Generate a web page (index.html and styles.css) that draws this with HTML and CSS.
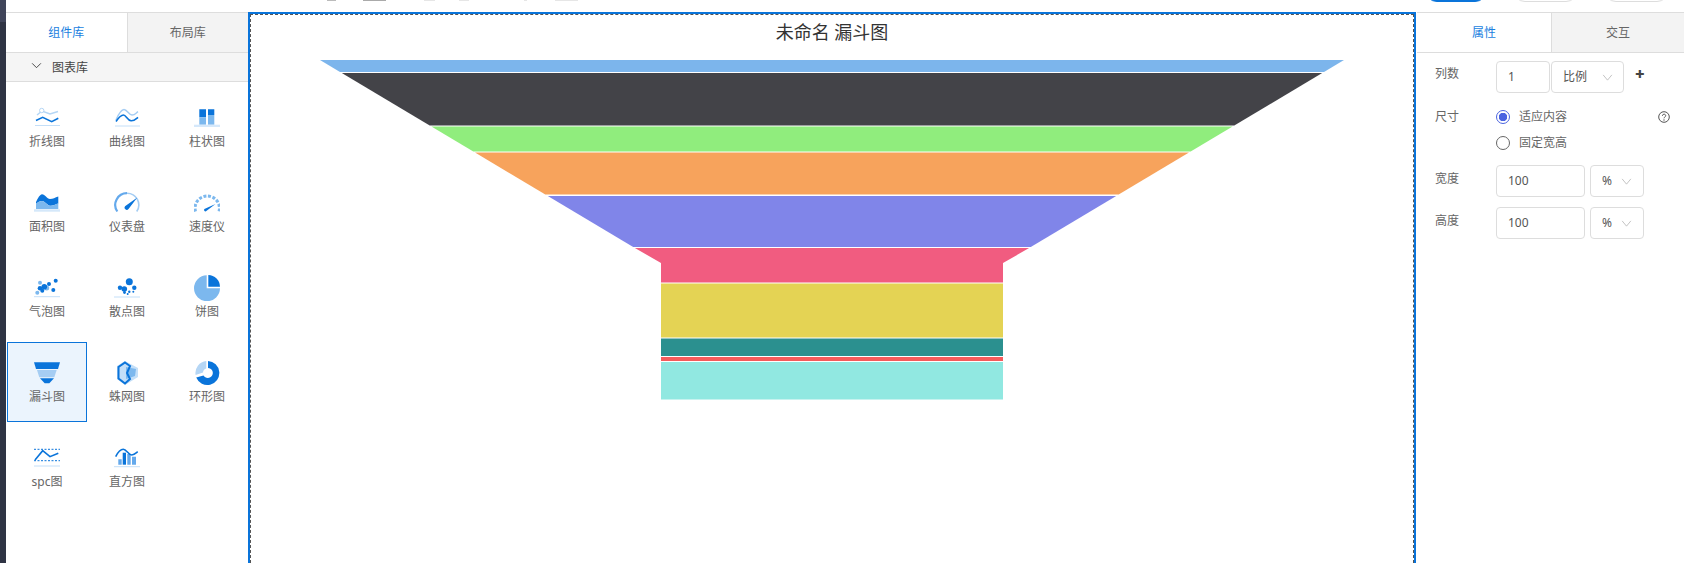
FILE: index.html
```html
<!DOCTYPE html>
<html lang="zh-CN">
<head>
    <meta charset="UTF-8">
    <meta name="viewport" content="width=device-width, initial-scale=1.0">
    <title>未命名 漏斗图</title>
    <link rel="stylesheet" href="styles.css">
</head>
<body>
    <div class="rail"><div class="rail-top"></div></div>
    <div class="main">
        <div class="topbar">
            <div class="top-tools">
                <span class="mark m1"></span><span class="mark m2"></span><span class="mark m3"></span>
                <span class="mark m4"></span><span class="mark m5"></span><span class="mark m6"></span>
            </div>
            <div class="top-btns">
                <span class="top-btn primary"></span>
                <span class="top-btn"></span>
                <span class="top-btn"></span>
            </div>
        </div>
        <div class="work">
            <div class="left">
                <div class="tabs">
                    <div class="tab active">组件库</div>
                    <div class="tab">布局库</div>
                </div>
                <div class="group-head">
                    <svg class="chev" viewBox="0 0 12 8"><path d="M1 1.500l5 5 5-5" fill="none" stroke="#333" stroke-width="1"/></svg>
                    <span>图表库</span>
                </div>
                <div class="grid">
                    <div class="cell">
                        <svg class="ico" viewBox="0 0 26 26">
                            <path d="M3 10L8 6l8 3 8-2.500" fill="none" stroke="#b5d6f5" stroke-width="1.500"/>
                            <circle cx="7.700" cy="5.500" r="2.200" fill="#fff" stroke="#b5d6f5"/>
                            <path d="M2 15.500l6.700-3.200 9 4.400 6.600-3.400" fill="none" stroke="#0a74da" stroke-width="1.600"/>
                            <path d="M1 20.500h25" stroke="#c4dff8"/>
                        </svg>
                        <div>折线图</div>
                    </div>
                    <div class="cell">
                        <svg class="ico" viewBox="0 0 26 26">
                            <path d="M2 15C5 8 7 4.500 10 4.500s5 5.500 8 5.500 4-2 6-3.300" fill="none" stroke="#a5cdf3" stroke-width="1.500"/>
                            <path d="M2 16.500C5 12 7 10 9.500 10s4 5.500 7.500 5.800 5-2 7-3.500" fill="none" stroke="#0a74da" stroke-width="1.600"/>
                            <path d="M1 21h25" stroke="#c4dff8"/>
                        </svg>
                        <div>曲线图</div>
                    </div>
                    <div class="cell">
                        <svg class="ico" viewBox="0 0 26 26">
                            <path d="M5.300 4.300H12v8H5.300zM14 4.300h6.300V10H14z" fill="#0a74da"/>
                            <path d="M5.300 12.300H12v7.400H5.300zM14 10h6.300v9.700H14z" fill="#7cb8ee"/>
                            <path d="M0 19.700h26V22H0z" fill="#d5e8fa"/>
                        </svg>
                        <div>柱状图</div>
                    </div>

                    <div class="cell">
                        <svg class="ico" viewBox="0 0 26 26">
                            <path d="M2 12C4 8 6 4.300 8 4.300c3 0 5 4.700 8 4.700 3 0 5-1.500 8.300-2.500v7C21 14.500 19 16 16 15.700 13 15.400 11 11 8 11c-2 0-4 1-6 3z" fill="#0a74da"/>
                            <path d="M2 13.500c2-1.500 4-2.500 6-2.500 3 0 5 4.400 8 4.700 3 .3 5-1.200 8.300-2.400V19H2z" fill="#7cb8ee"/>
                            <path d="M0 19.300h26v2.400H0z" fill="#d5e8fa"/>
                        </svg>
                        <div>面积图</div>
                    </div>
                    <div class="cell">
                        <svg class="ico" viewBox="0 0 26 26">
                            <path d="M3.300 21.500A11.700 11.700 0 0 1 13 3.200" fill="none" stroke="#64a9ec" stroke-width="2.200"/>
                            <path d="M13 3.200a11.700 11.700 0 0 1 9.700 18.300" fill="none" stroke="#a5cdf3" stroke-width="1.600"/>
                            <path d="M23.300 7.500L14.500 19a2.200 2.200 0 0 1-3.500-2.800z" fill="#0a74da"/>
                        </svg>
                        <div>仪表盘</div>
                    </div>
                    <div class="cell">
                        <svg class="ico" viewBox="0 0 26 26">
                            <path d="M1.500 21.500A12.200 12.200 0 1 1 25 21.500" fill="none" stroke="#7cb8ee" stroke-width="3" stroke-dasharray="3 1.600"/>
                            <path d="M21.500 14L12 21.300a1.500 1.500 0 0 1-1.600-2.400z" fill="#0a74da"/>
                        </svg>
                        <div>速度仪</div>
                    </div>

                    <div class="cell">
                        <svg class="ico" viewBox="0 0 26 26">
                            <g fill="#7cb8ee">
                                <circle cx="6" cy="7.700" r="2"/><circle cx="12.700" cy="13" r="2.500"/><circle cx="3.300" cy="17.700" r="2"/>
                            </g>
                            <g fill="#0a74da">
                                <circle cx="21.700" cy="5.700" r="2"/><circle cx="15" cy="9" r="2"/><circle cx="10.300" cy="11.700" r="2.800"/>
                                <circle cx="6" cy="13.300" r="2.300"/><circle cx="8.300" cy="15.700" r="2"/><circle cx="19.300" cy="15" r="2"/>
                            </g>
                            <path d="M0 21.700h26" stroke="#c4dff8"/>
                        </svg>
                        <div>气泡图</div>
                    </div>
                    <div class="cell">
                        <svg class="ico" viewBox="0 0 26 26">
                            <g fill="#0a74da">
                                <circle cx="15.300" cy="6.700" r="3.500"/><circle cx="20.300" cy="12.700" r="2.200"/><circle cx="6" cy="12.700" r="2.200"/>
                                <circle cx="10.300" cy="14" r="2.800"/><circle cx="15.300" cy="16.700" r="1.200"/><circle cx="19.300" cy="16.700" r="1"/>
                                <circle cx="13.700" cy="19" r="1"/><circle cx="10.500" cy="17.500" r="1.400"/>
                            </g>
                            <path d="M0 22h26" stroke="#c4dff8"/>
                        </svg>
                        <div>散点图</div>
                    </div>
                    <div class="cell">
                        <svg class="ico" viewBox="0 0 26 26">
                            <path d="M12.700 0.200A13 13 0 1 0 26 13.300H12.700z" fill="#7cb8ee"/>
                            <path d="M14.300 0A11.800 11.800 0 0 1 26 11.700H14.300z" fill="#0a74da"/>
                        </svg>
                        <div>饼图</div>
                    </div>

                    <div class="cell selected">
                        <svg class="ico" viewBox="0 0 26 26">
                            <path d="M0 2.300h26L24 9H2z" fill="#0a74da"/>
                            <path d="M3 10h19.700l-2.400 7.300H5.300z" fill="#a5cdf3"/>
                            <path d="M6 18.300h14l-4.700 5h-4.600z" fill="#0a74da"/>
                        </svg>
                        <div>漏斗图</div>
                    </div>
                    <div class="cell">
                        <svg class="ico" viewBox="0 0 26 26">
                            <path d="M11 1l13 7v9l-13 8-8-6V6z" fill="#c4dff8"/>
                            <path d="M12 7l10 2-1 7-9 3z" fill="#7cb8ee"/>
                            <path d="M11 2.500l5 3.500-3 7 3 6-5 4.500-6.500-5V7z" fill="none" stroke="#0a74da" stroke-width="2"/>
                        </svg>
                        <div>蛛网图</div>
                    </div>
                    <div class="cell">
                        <svg class="ico" viewBox="0 0 26 26">
                            <path d="M12.300 1A12 12 0 0 0 1.600 15L9 12.500A4.500 4.500 0 0 1 12.300 8.500z" fill="#b5d6f5"/>
                            <path d="M14 1A12 12 0 1 1 2.200 17.500L9.500 15.500A5 5 0 1 0 14 8z" fill="#0a74da"/>
                        </svg>
                        <div>环形图</div>
                    </div>

                    <div class="cell">
                        <svg class="ico" viewBox="0 0 26 26">
                            <path d="M0 4.300h26M0 15.700h26" stroke="#0a74da" stroke-dasharray="2 1.500"/>
                            <path d="M1 15l7.700-9.300 7.300 6 8.300-3.400" fill="none" stroke="#0a74da" stroke-width="1.600"/>
                            <path d="M0 21h26" stroke="#c4dff8"/>
                        </svg>
                        <div>spc图</div>
                    </div>
                    <div class="cell">
                        <svg class="ico" viewBox="0 0 26 26">
                            <path d="M4.300 14.300h3.400v5.400H4.300zM13.300 9h3.400v10.700h-3.400zM18 11.700h4v8h-4z" fill="#64a9ec"/>
                            <path d="M8.700 7.700H12v12H8.700z" fill="#0a74da"/>
                            <path d="M1.700 11.700C4 7 6.500 4.300 9.300 4.300c3.200 0 5 5.700 8.400 5.700 2.300 0 4-1.700 6-3.300" fill="none" stroke="#0a74da" stroke-width="1.600"/>
                            <path d="M0 21.700h26" stroke="#c4dff8"/>
                        </svg>
                        <div>直方图</div>
                    </div>
                </div>
            </div>

            <div class="canvas">
                <div class="canvas-inner">
                    <div class="chart-title">未命名 漏斗图</div>
                    <svg class="funnel" viewBox="300 60 1064 344">
                        <polygon fill="#7cb5ec" points="320,60 1344,60 1324,72 340,72"/>
                        <polygon fill="#434348" points="341.800,73 1322.200,73 1234.300,125.500 429.700,125.500"/>
                        <polygon fill="#90ed7d" points="431.400,126.500 1232.600,126.500 1190.700,151.500 473.300,151.500"/>
                        <polygon fill="#f7a35c" points="475,152.500 1189,152.500 1118.700,194.500 545.300,194.500"/>
                        <polygon fill="#8085e9" points="547.800,196 1116.200,196 1030.800,247 633.200,247"/>
                        <polygon fill="#f15c80" points="634.900,248 1029.100,248 1003,263 1003,282.500 661,282.500 661,263"/>
                        <rect fill="#e4d354" x="661" y="283.500" width="342" height="54"/>
                        <rect fill="#2b908f" x="661" y="338.500" width="342" height="17.500"/>
                        <rect fill="#f45b5b" x="661" y="357" width="342" height="4"/>
                        <rect fill="#91e8e1" x="661" y="362" width="342" height="37.500"/>
                    </svg>
                </div>
            </div>

            <div class="right">
                <div class="tabs">
                    <div class="tab active">属性</div>
                    <div class="tab">交互</div>
                </div>
                <div class="form">
                    <div class="row">
                        <div class="lbl lbl-up">列数</div>
                        <div class="field small">1</div>
                        <div class="field select ratio">比例<svg class="arrow" viewBox="0 0 12 8"><path d="M1 1l5 6 5-6" fill="none" stroke="#bbb"/></svg></div>
                        <span class="plus">✚</span>
                    </div>
                    <div class="row radios">
                        <div class="lbl">尺寸</div>
                        <div class="radio-list">
                            <div class="radio-row"><span class="radio on"></span>适应内容<svg class="help" viewBox="0 0 12 12"><circle cx="6" cy="6" r="5.300" fill="none" stroke="#555"/><path d="M4.400 4.800c0-2.200 3.300-2.100 3.300-.1 0 1.300-1.700 1.300-1.700 2.600" fill="none" stroke="#555"/><circle cx="6" cy="9" r=".7" fill="#555"/></svg></div>
                            <div class="radio-row"><span class="radio"></span>固定宽高</div>
                        </div>
                    </div>
                    <div class="row">
                        <div class="lbl">宽度</div>
                        <div class="field wide">100</div>
                        <div class="field select unit">%<svg class="arrow" viewBox="0 0 12 8"><path d="M1 1l5 6 5-6" fill="none" stroke="#bbb"/></svg></div>
                    </div>
                    <div class="row">
                        <div class="lbl">高度</div>
                        <div class="field wide">100</div>
                        <div class="field select unit">%<svg class="arrow" viewBox="0 0 12 8"><path d="M1 1l5 6 5-6" fill="none" stroke="#bbb"/></svg></div>
                    </div>
                </div>
            </div>
        </div>
    </div>
</body>
</html>
```

FILE: styles.css
```css
* {
    box-sizing: border-box;
}
html, body {
    height: 100%;
    margin: 0;
    overflow: hidden;
}
body {
    display: flex;
    background: #fff;
    color: #666;
    font-family: "Noto Sans", "Noto Sans CJK SC", sans-serif;
    font-size: 12px;
    line-height: 16px;
}
.rail {
    width: 6px;
    flex: none;
    background: #2f3444;
}
.rail-top {
    height: 22px;
    background: #40455a;
}
.main {
    flex: 1;
    display: flex;
    flex-direction: column;
    min-width: 0;
}

/* top bar, only its last pixels are inside the screenshot */
.topbar {
    height: 12px;
    flex: none;
    display: flex;
    align-items: flex-end;
    overflow: hidden;
}
.top-tools {
    display: flex;
    flex: none;
    align-self: flex-start;
    width: 1419px;
    height: 1px;
}
.mark {
    height: 1px;
    background: #e6e6e6;
}
.m1 { width: 9px; margin-left: 321px; background: #bbb; }
.m2 { width: 23px; margin-left: 27px; background: #aaa; }
.m3 { width: 11px; margin-left: 38px; }
.m4 { width: 10px; margin-left: 24px; }
.m5 { width: 3px; margin-left: 55px; }
.m6 { width: 23px; margin-left: 28px; }
.top-btns {
    display: flex;
    gap: 26px;
    flex: none;
    margin-bottom: 10px;
}
.top-btn {
    width: 65px;
    height: 30px;
    border: 1px solid #ddd;
    border-radius: 12px;
    background: #fff;
}
.top-btn.primary {
    width: 62px;
    background: #0a74da;
    border-color: #0a74da;
}

.work {
    flex: 1;
    display: flex;
    min-height: 0;
}
.left {
    width: 242px;
    flex: none;
}
.tabs {
    display: flex;
    height: 41px;
    border-top: 1px solid #ddd;
    border-bottom: 1px solid #ddd;
}
.tab {
    flex: 1;
    text-align: center;
    line-height: 39px;
    background: #f3f3f3;
}
.tab.active {
    background: #fff;
    color: #1a7fe0;
    border-right: 1px solid #ddd;
}
.group-head {
    height: 29px;
    display: flex;
    align-items: center;
    padding-left: 25px;
    padding-top: 2px;
    background: #f5f5f5;
    border-bottom: 1px solid #ddd;
    color: #444;
}
.chev {
    width: 11px;
    height: 7px;
    margin-right: 10px;
    margin-top: -5px;
}
.grid {
    display: grid;
    grid-template-columns: repeat(3, 80px);
    grid-auto-rows: 80px;
    row-gap: 5px;
    padding: 5px 0 0 1px;
}
.cell {
    padding-top: 18px;
    text-align: center;
    border: 1px solid transparent;
    border-top-width: 0;
}
.cell .ico {
    display: block;
    width: 26px;
    height: 26px;
    margin: 0 auto 3px;
}
.cell.selected {
    background: #ebf4fd;
    border: 1px solid #0a74da;
    padding-top: 17px;
}

.canvas {
    flex: 1;
    min-width: 0;
    border: 2px solid #0a74da;
    border-bottom: 0;
    margin-right: 1px;
}
.canvas-inner {
    height: 100%;
    border: 1px dashed #555;
    border-bottom: 0;
    padding-top: 5px;
    overflow: hidden;
}
.chart-title {
    height: 24px;
    line-height: 24px;
    text-align: center;
    font-size: 18px;
    color: #333;
}
.funnel {
    display: block;
    width: 1064px;
    height: 344px;
    margin: 16px 0 0 49px;
}

.right {
    width: 267px;
    flex: none;
}
.right .tab.active {
    flex: none;
    width: 135px;
}
.form {
    padding: 8px 0 0 18px;
}
.row {
    display: flex;
    align-items: center;
    margin-bottom: 10px;
}
.lbl {
    width: 61px;
    flex: none;
    margin-top: -4px;
}
.lbl-up {
    margin-top: -6px;
}
.field {
    height: 32px;
    line-height: 30px;
    padding-left: 11px;
    border: 1px solid #ddd;
    border-radius: 4px;
    background: #fff;
    font-size: 12px;
    color: #555;
}
.small {
    width: 54px;
}
.select {
    display: flex;
    align-items: center;
    justify-content: space-between;
}
.ratio {
    width: 73px;
    margin-left: 1px;
    padding-right: 10px;
}
.wide {
    width: 89px;
}
.unit {
    width: 54px;
    margin-left: 5px;
    padding-right: 11px;
}
.arrow {
    width: 11px;
    height: 7px;
}
.plus {
    margin-left: 11px;
    margin-top: -4px;
    color: #444;
    font-family: "DejaVu Sans", sans-serif;
    font-size: 11px;
}
.radios {
    align-items: flex-start;
    margin-bottom: 9px;
    padding-top: 1px;
}
.radios .lbl {
    margin-top: 5px;
}
.radio-list {
    flex: 1;
}
.radio-row {
    display: flex;
    align-items: center;
    height: 26px;
    padding-right: 14px;
}
.radio {
    width: 14px;
    height: 14px;
    margin-right: 9px;
    border: 1px solid #666;
    border-radius: 50%;
    background: #fff;
}
.radio.on {
    border-color: #4a63e0;
    background: radial-gradient(circle, #4a63e0 0 4px, #fff 4.500px);
}
.help {
    width: 12px;
    height: 12px;
    margin-left: auto;
}
```
